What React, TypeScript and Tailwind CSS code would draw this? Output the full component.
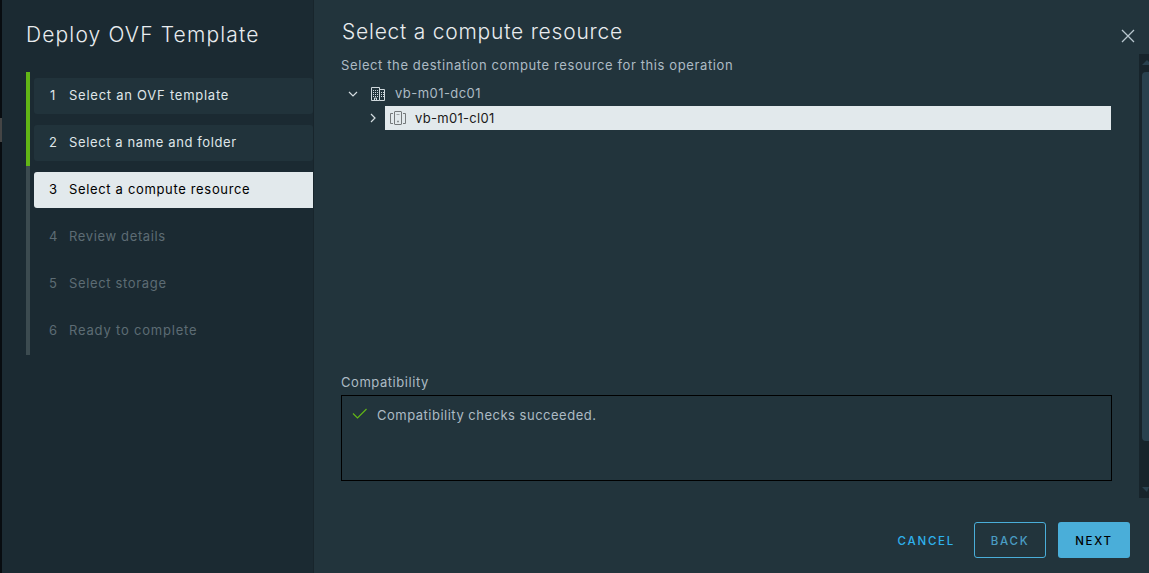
import { useState } from "react";

const steps = [
  { label: "Select an OVF template", spacing: "tracking-[0.75px]" },
  { label: "Select a name and folder", spacing: "tracking-[0.62px]" },
  { label: "Select a compute resource", spacing: "tracking-[0.66px]" },
  { label: "Review details", spacing: "tracking-[0.64px]" },
  { label: "Select storage", spacing: "tracking-[0.65px]" },
  { label: "Ready to complete", spacing: "tracking-[0.8px]" },
];

function DatacenterIcon() {
  return (
    <svg width="16" height="16" viewBox="0 0 16 16" fill="none" stroke="#d0d9dd">
      <path d="M1.5 14.5v-13h8v13zM9.5 3.5h5v11h-5" />
      <path d="M3 4.5h5M3 6.5h5M3 8.5h5M3 10.5h5" strokeDasharray="1 1" />
      <path d="M11 6.5h3M11 8.5h3M11 10.5h3" strokeDasharray="1 1" />
      <path d="M4.5 14v-2h2v2" />
    </svg>
  );
}

function ClusterIcon() {
  return (
    <svg width="16" height="16" viewBox="0 0 16 16" fill="none" stroke="#74797b">
      <rect x="4.5" y="1.5" width="7" height="13" rx="0.5" />
      <path d="M3 3.5H0.5v10H3M13 3.5h2.5v10H13" />
      <path d="M6.5 4.5h3" stroke="#a0a6a8" />
      <path d="M7.2 11.5h1.6" strokeWidth="1.6" />
    </svg>
  );
}

export default function App() {
  const [current, setCurrent] = useState(2);

  return (
    <div className="flex h-[573px] w-[1149px] overflow-hidden bg-[#22343c] font-['Inter','Liberation_Sans',sans-serif] text-[13px] text-[#adbbc4]">
      <div className="w-0.5 shrink-0 bg-[#080c10] pt-[118px]">
        <div className="h-6 bg-[#454545]" />
      </div>

      <aside className="w-[312px] shrink-0 border-r border-[#18252c] bg-[#1b2a32] pl-6">
        <h1 className="h-[72px] pt-5 text-[21px] leading-[30px] font-light tracking-[1.15px] whitespace-nowrap text-[#e9ecef]">
          Deploy OVF Template
        </h1>
        <ol>
          {steps.map((step, i) => (
            <li
              key={step.label}
              className={`h-[47px] border-l-4 pt-1.5 pl-1 last:h-12 ${
                i < current ? "border-[#62b516]" : "border-[#3c4b50]"
              }`}
            >
              <button
                onClick={() => setCurrent(i)}
                disabled={i > current}
                className={`flex h-9 w-full items-center rounded-l-[3px] pl-[15px] text-left ${step.spacing} ${
                  i === current
                    ? "bg-[#e2e9ec] text-black"
                    : i < current
                      ? "rounded-r-[3px] bg-[#21333b] text-[#dfe5e8]"
                      : "text-[#5d6c74]"
                }`}
              >
                <span className="w-2 text-center">{i + 1}</span>
                <span className="ml-3 whitespace-nowrap">{step.label}</span>
              </button>
            </li>
          ))}
        </ol>
      </aside>

      <main className="flex min-w-0 flex-1 flex-col">
        <header className="flex h-[54px] shrink-0 justify-between pr-[14px] pl-7">
          <h2 className="pt-[17px] text-[21px] leading-[30px] font-light tracking-[0.77px] text-[#e9ecef]">
            Select a compute resource
          </h2>
          <button aria-label="Close" className="mt-[29px] h-[14px]">
            <svg width="14" height="14" viewBox="0 0 14 14" stroke="#b8c6ce" strokeWidth="1.3">
              <path d="M1 1l12 12M13 1L1 13" />
            </svg>
          </button>
        </header>

        <div className="flex h-[444px] shrink-0">
          <section className="flex-1 pr-[27px] pl-[27px]">
            <p className="h-[27px] leading-[22px] tracking-[0.61px]">
              Select the destination compute resource for this operation
            </p>
            <div className="h-[290px] pr-px">
              <div className="flex h-[25px] items-center pl-[7px]">
                <svg width="10" height="10" viewBox="0 0 10 10" fill="none" stroke="#d5dde1" strokeWidth="1.2">
                  <path d="M1 3l4 4 4-4" />
                </svg>
                <span className="ml-3">
                  <DatacenterIcon />
                </span>
                <span className="ml-[9px] tracking-[0.45px]">vb-m01-dc01</span>
              </div>
              <div className="flex h-6 items-center pl-[27px]">
                <svg width="10" height="10" viewBox="0 0 10 10" fill="none" stroke="#d5dde1" strokeWidth="1.2">
                  <path d="M3 1l4 4-4 4" />
                </svg>
                <div className="ml-[7px] flex h-6 flex-1 items-center bg-[#e2e9ec] pl-[5px] text-[#1a1a1a]">
                  <ClusterIcon />
                  <span className="ml-[9px] pt-px tracking-[0.3px]">vb-m01-cl01</span>
                </div>
              </div>
            </div>
            <p className="h-6 pt-0.5 leading-[18px] tracking-[0.55px]">Compatibility</p>
            <div className="flex h-[86px] border border-black pt-[9px] pl-[10px]">
              <svg width="16" height="16" viewBox="0 0 16 16" fill="none" stroke="#62b516" strokeWidth="1.2">
                <path d="M1 8.5l4.5 4.5 9-9" />
              </svg>
              <span className="ml-[9px] leading-5 tracking-[0.5px]">
                Compatibility checks succeeded.
              </span>
            </div>
          </section>

          <div className="flex w-[10px] shrink-0 flex-col items-end bg-[#17242b] pt-1.5 pb-1.5">
            <svg width="7" height="5" viewBox="0 0 7 5" fill="#29414e">
              <path d="M0 5l5-5 2 2v3z" />
            </svg>
            <div className="mt-[7px] h-[369px] w-[7px] rounded-l-[4px] bg-[#29414e]" />
            <div className="flex-1" />
            <svg width="7" height="5" viewBox="0 0 7 5" fill="#29414e">
              <path d="M0 0h7L5 5z" />
            </svg>
          </div>
        </div>

        <footer className="flex flex-1 items-start justify-end gap-3 pt-6 pr-[19px] text-[11.5px] font-medium tracking-[1.75px]">
          <button className="h-9 pt-[3px] pr-[7px] text-[#2fb1ec]">CANCEL</button>
          <button className="h-9 w-[72px] rounded-[3px] border border-[#4aaed9] pt-[3px] text-[#4a9dc4]">
            BACK
          </button>
          <button className="h-9 w-[72px] rounded-[3px] bg-[#4aaed9] pt-[3px] text-black">
            NEXT
          </button>
        </footer>
      </main>
    </div>
  );
}
